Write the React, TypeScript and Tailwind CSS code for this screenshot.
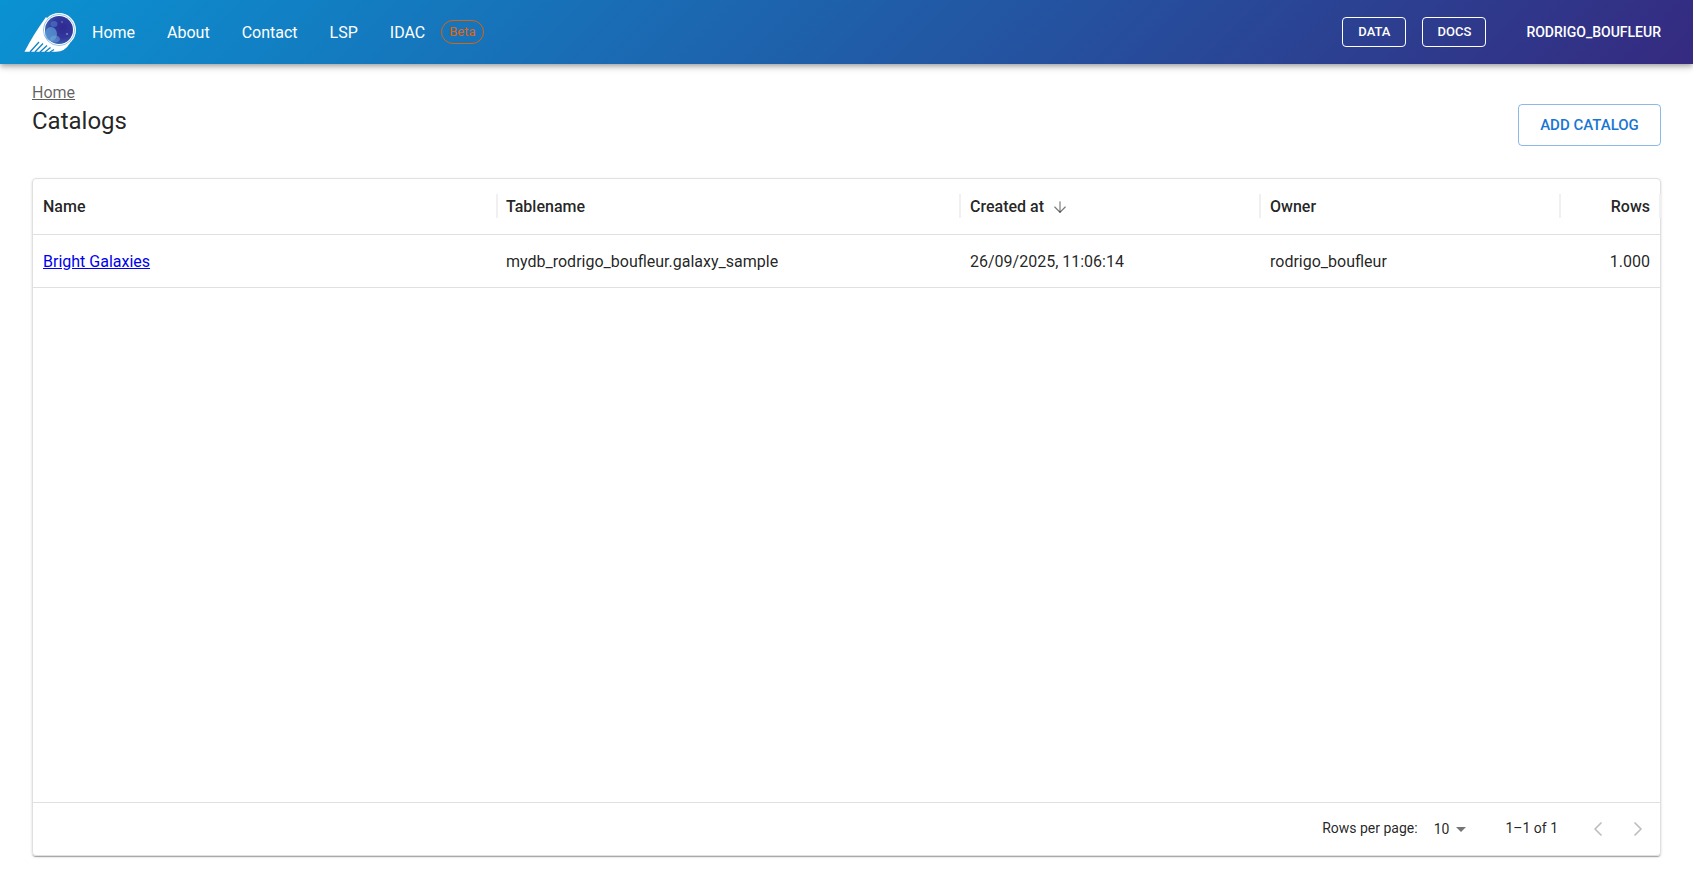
import React from "react";
import { ArrowDown, ChevronLeft, ChevronRight } from "lucide-react";

const navItems = ["Home", "About", "Contact", "LSP", "IDAC"];

function Logo() {
  return (
    <svg width="54" height="42" viewBox="0 0 54 42" className="shrink-0">
      <defs>
        <radialGradient id="globe" cx="65%" cy="40%" r="70%">
          <stop offset="0%" stopColor="#2e2a92" />
          <stop offset="55%" stopColor="#33389c" />
          <stop offset="100%" stopColor="#3d6db8" />
        </radialGradient>
      </defs>
      {/* Tail */}
      <path d="M0.5 40.8 Q9 24 22 6 L46 32 Q41 40.8 32 40.8 Z" fill="#fff" />
      <path
        d="M6 41 L15 31 M11 41 L19 32.5 M16 41 L23 34.5 M21 41 L26.5 36.5 M26 41 L30 38.5"
        stroke="#1184c6"
        strokeWidth="1.3"
      />
      {/* Ring */}
      <circle cx="35" cy="19" r="17" fill="#fff" />
      <circle cx="35" cy="19" r="15.6" fill="none" stroke="#4aa3da" strokeWidth="0.6" />
      <circle cx="35" cy="19" r="14" fill="url(#globe)" />
      <ellipse cx="27" cy="23" rx="6" ry="7" fill="#5c9bd6" opacity="0.75" />
      <ellipse cx="31" cy="28" rx="5" ry="3.5" fill="#6fa9de" opacity="0.5" />
      <ellipse cx="30" cy="13" rx="3.5" ry="3" fill="#4f7fc8" opacity="0.6" />
      <circle cx="43" cy="23" r="0.8" fill="#b6c3ee" />
      <circle cx="38" cy="11" r="0.7" fill="#8e9be0" />
    </svg>
  );
}

function ColumnHead({ children, className = "" }: { children: React.ReactNode; className?: string }) {
  return (
    <div className={`relative flex items-center px-2.5 font-medium ${className}`}>
      {children}
      <span className="absolute right-[-1px] top-[15px] h-6 w-0.5 bg-[#f0f0f0]" />
    </div>
  );
}

export default function App() {
  return (
    <div className="min-h-[888px] bg-white text-[#000000de] font-['Roboto',sans-serif]">
      {/* App bar */}
      <header className="flex h-16 items-center bg-[linear-gradient(135deg,#0a92d2,#352a80)] pl-6 pr-8 text-white shadow-[0_2px_4px_-1px_rgba(0,0,0,0.2),0_4px_5px_0_rgba(0,0,0,0.14),0_1px_10px_0_rgba(0,0,0,0.12)]">
        <Logo />
        <nav className="ml-[14px] flex items-center gap-8 pt-0.5 text-base">
          {navItems.map((item) => (
            <a key={item}>{item}</a>
          ))}
        </nav>
        <span className="ml-4 flex h-6 items-center rounded-full border border-[#d9640f] px-[7px] text-[13px] text-[#e0650f]">
          Beta
        </span>
        <div className="ml-auto flex items-center gap-4">
          <a className="flex h-[30px] w-16 items-center justify-center rounded border border-white text-[13px] font-medium">
            DATA
          </a>
          <a className="flex h-[30px] w-16 items-center justify-center rounded border border-white text-[13px] font-medium">
            DOCS
          </a>
          <span className="ml-6 text-sm font-medium">RODRIGO_BOUFLEUR</span>
        </div>
      </header>

      {/* Page content */}
      <main className="px-8 pt-[17px]">
        <div className="flex items-start justify-between">
          <div>
            <a className="block text-base leading-6 text-[#000000a0] underline">Home</a>
            <h1 className="text-2xl leading-8">Catalogs</h1>
          </div>
          <button className="mt-[23px] flex h-[42px] w-[143px] items-center justify-center rounded border border-[#1976d280] text-[15px] font-medium text-[#1976d2]">
            ADD CATALOG
          </button>
        </div>

        {/* Table */}
        <section className="mt-8 flex h-[678px] flex-col rounded border border-[#e0e0e0] shadow-[0_2px_1px_-1px_rgba(0,0,0,0.2),0_1px_1px_0_rgba(0,0,0,0.14),0_1px_3px_0_rgba(0,0,0,0.12)]">
          <div className="grid h-[56px] shrink-0 grid-cols-[464px_463px_300px_300px_1fr] border-b border-[#e0e0e0] text-base">
            <ColumnHead>Name</ColumnHead>
            <ColumnHead className="pl-[9px]">Tablename</ColumnHead>
            <ColumnHead>
              Created at
              <ArrowDown className="ml-[7px] text-[#0000008a]" size={18} strokeWidth={1.5} />
            </ColumnHead>
            <ColumnHead>Owner</ColumnHead>
            <ColumnHead className="justify-end">Rows</ColumnHead>
          </div>
          <div className="grid h-[53px] shrink-0 grid-cols-[464px_463px_300px_300px_1fr] items-center border-b border-[#e0e0e0] pt-px text-base">
            <a className="px-2.5 text-[#0000ee] underline">Bright Galaxies</a>
            <div className="pl-[9px] pr-2.5">mydb_rodrigo_boufleur.galaxy_sample</div>
            <div className="px-2.5">26/09/2025, 11:06:14</div>
            <div className="px-2.5">rodrigo_boufleur</div>
            <div className="px-2.5 text-right">1.000</div>
          </div>
          <div className="flex-1" />
          <footer className="flex h-[53px] shrink-0 items-center justify-end border-t border-[#e0e0e0] pr-[10px] text-sm">
            <span className="mb-0.5">Rows per page:</span>
            <span className="ml-4">10</span>
            <svg width="24" height="24" viewBox="0 0 24 24" className="text-[#0000008a]">
              <path d="M7 10l5 5 5-5z" fill="currentColor" />
            </svg>
            <span className="mb-0.5 ml-[32px]">1–1 of 1</span>
            <div className="ml-[28px] flex items-center gap-4 text-[#00000042]">
              <ChevronLeft size={24} strokeWidth={1.7} />
              <ChevronRight size={24} strokeWidth={1.7} />
            </div>
          </footer>
        </section>
      </main>
    </div>
  );
}
